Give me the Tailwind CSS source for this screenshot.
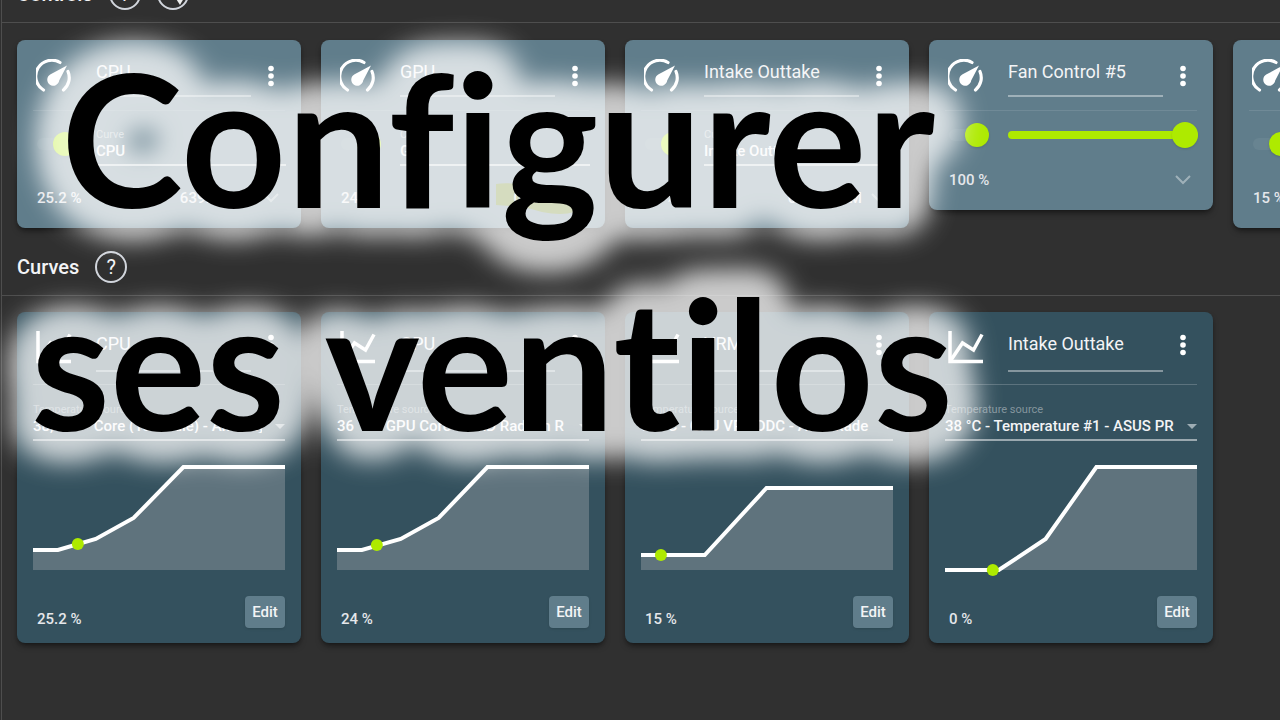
<!DOCTYPE html>
<html lang="fr">
<head>
    <meta charset="UTF-8">
    <meta name="viewport" content="width=device-width, initial-scale=1.0">
    <title>Configurer ses ventilos</title>
    <script src="https://cdn.jsdelivr.net/npm/@tailwindcss/browser@4"></script>
</head>
<body class="bg-[#303030] text-white font-[Roboto,sans-serif] h-screen overflow-hidden relative">
    <main class="ml-px min-h-screen flow-root overflow-hidden border-l border-white/15">
        <section class="-mt-[34px]">
            <header class="h-[57px] pl-[15px] flex items-center gap-4 border-b border-white/15">
                <h2 class="text-xl font-medium text-gray-100">Controls</h2>
                <button aria-label="Help" class="size-8 rounded-full border-2 border-gray-300 text-xl text-gray-100 flex items-center justify-center">?</button>
                <button aria-label="Status" class="size-8 rounded-full border-2 border-gray-300 flex items-center justify-center">
                    <svg class="size-7" viewBox="0 0 28 28" fill="#eee"><path d="M14 14L25 18L21 25Z"/></svg>
                </button>
            </header>
            <div id="controls" class="pt-[17px] pb-[11px] pl-[15px] flex items-start gap-5"></div>
        </section>
        <section>
            <header class="h-[57px] pl-[15px] flex items-center gap-4 border-b border-white/15">
                <h2 class="text-xl font-medium text-gray-100">Curves</h2>
                <button aria-label="Help" class="size-8 rounded-full border-2 border-gray-300 text-xl text-gray-100 flex items-center justify-center">?</button>
            </header>
            <div id="curves" class="pt-4 pl-[15px] flex items-start gap-5"></div>
        </section>
    </main>

    <!-- title over the dashboard, with a soft white halo -->
    <svg class="absolute size-0" aria-hidden="true">
        <filter id="halo" x="-10%" y="-20%" width="120%" height="140%" color-interpolation-filters="sRGB">
            <feGaussianBlur in="SourceAlpha" stdDeviation="18"/>
            <feComponentTransfer>
                <feFuncR type="linear" slope="0" intercept="1"/>
                <feFuncG type="linear" slope="0" intercept="1"/>
                <feFuncB type="linear" slope="0" intercept="1"/>
                <feFuncA type="linear" slope="18"/>
            </feComponentTransfer>
            <feGaussianBlur stdDeviation="11"/>
            <feComponentTransfer result="glow">
                <feFuncA type="linear" slope="0.75"/>
            </feComponentTransfer>
            <feMerge>
                <feMergeNode in="glow"/>
                <feMergeNode in="SourceGraphic"/>
            </feMerge>
        </filter>
    </svg>
    <h1 class="absolute top-6 left-0 w-[996px] text-center leading-[225px] font-bold text-black font-[Lato,sans-serif] [font-variant-ligatures:none] [filter:url(#halo)] pointer-events-none">
        <span class="block text-[184px] leading-[225px]">Configurer</span>
        <span class="block text-[180px] leading-[225px] pr-3">ses ventilos</span>
    </h1>

    <script>
        const controls = [
            { name: 'CPU', curve: 'CPU', value: '25.2 %', rpm: '639.2 RPM' },
            { name: 'GPU', curve: 'GPU', value: '24 %', rpm: '0 RPM', marked: true },
            { name: 'Intake Outtake', curve: 'Intake Outtake', value: '15 %', rpm: '638.5 RPM' },
            { name: 'Fan Control #5', value: '100 %' },
            { name: 'VRM', curve: 'VRM', value: '15 %', rpm: '0 RPM' },
        ];

        const curves = [
            { name: 'CPU', source: '38,3 °C - Core (Tctl/Tdie) - AMD Ryzen', value: '25.2 %', line: '0,86 25,86 63,75 101,54 151,3 253,3', dot: [45, 80] },
            { name: 'GPU', source: '36 °C - GPU Core - AMD Radeon R', value: '24 %', line: '0,86 25,86 64,75 102,54 151,3 253,3', dot: [40, 81] },
            { name: 'VRM', source: '34 °C - GPU VR VDDC - AMD Rade', value: '15 %', line: '0,91 64,91 126,24 253,24', dot: [20, 91] },
            { name: 'Intake Outtake', source: '38 °C - Temperature #1 - ASUS PRIME', value: '0 %', line: '0,106 54,106 101,75 152,3 253,3', dot: [48, 106] },
        ];

        const dots = `<svg class="w-2 h-6" viewBox="0 0 8 24" fill="#fff"><circle cx="4" cy="4.500" r="2.800"/><circle cx="4" cy="12" r="2.800"/><circle cx="4" cy="19.500" r="2.800"/></svg>`;

        const gauge = `
            <svg class="size-9 mt-1 shrink-0" viewBox="0 0 36 36" fill="none" stroke="#fff" stroke-width="3.200">
                <path d="M7.500 31A16 16 0 0 1 24 3.500M32 12.500A16 16 0 0 1 27.500 31" stroke-linecap="round"/>
                <path d="M31 6.500L23.200 21.500A6 6 0 1 1 14.200 15.500Z" fill="#fff" stroke="none"/>
            </svg>`;

        const graph = `
            <svg class="size-9 mt-[3px] shrink-0" viewBox="0 0 36 36" fill="none" stroke="#fff">
                <path d="M2 1V31.500H35" stroke-width="3.500"/>
                <path d="M3 30L14.500 13L25.500 20L34 4.500" stroke-width="3.500"/>
            </svg>`;

        document.getElementById('controls').innerHTML = controls.map((c, i) => `
            <article class="w-[284px] shrink-0 rounded-lg bg-[#607d8b] shadow-md shadow-black/40 overflow-hidden">
                <div class="h-[70px] pt-[15px] pl-[19px] flex items-start">
                    ${gauge}
                    <input aria-label="Control name" value="${c.name}" class="ml-6 w-[155px] h-[42px] pb-2 border-b-2 border-white/40 text-lg text-gray-100 outline-none">
                    <button aria-label="Menu" class="ml-2 w-6 h-[42px] flex items-center justify-center">${dots}</button>
                </div>
                <hr class="mx-4 border-white/10">
                <div class="${c.curve ? 'h-[66px]' : 'h-12'} pl-5 flex items-center">
                    <input type="checkbox" checked aria-label="Enable ${c.name}" class="appearance-none relative w-10 h-6 mr-[19px] shrink-0 before:absolute before:left-0 before:top-[6px] before:w-8 before:h-3 before:rounded-full before:bg-white/5 after:absolute after:right-0 after:top-0 after:size-6 after:rounded-full after:bg-[#aeea00] after:shadow">
                    ${c.curve ? `
                    <div class="w-[190px] pt-[6px] flex flex-col">
                        <label for="curve-${i}" class="text-[11px] leading-[14px] text-white/50">Curve</label>
                        <select id="curve-${i}" class="appearance-none h-6 pb-[6px] border-b-2 border-white/60 text-[15px] leading-[18px] font-medium text-gray-100"><option>${c.curve}</option></select>
                    </div>` : `
                    <input type="range" value="100" aria-label="Fan speed" class="appearance-none w-[190px] h-2 rounded-full bg-[#aeea00] [&::-webkit-slider-thumb]:appearance-none [&::-webkit-slider-thumb]:size-[26px] [&::-webkit-slider-thumb]:rounded-full [&::-webkit-slider-thumb]:bg-[#aeea00] [&::-webkit-slider-thumb]:shadow">`}
                </div>
                <div class="h-[42px] mb-[9px] pl-5 pr-[22px] flex items-center text-[15px] font-medium text-gray-200 relative">
                    ${c.marked ? `<svg class="absolute right-[27px] top-1 w-[84px] h-9" viewBox="0 0 84 36" fill="#5a7400"><path d="M2 3Q20 0 40 8L70 16Q86 24 80 31Q68 35 48 31L30 26L2 24Z"/></svg>` : ''}
                    <span>${c.value}</span>
                    <span class="ml-auto mr-[9px] relative">${c.rpm || ''}</span>
                    <button aria-label="Expand"><svg class="w-4 h-3" viewBox="0 0 16 12" fill="none" stroke="#fff" stroke-opacity="0.400" stroke-width="2"><path d="M1 2L8 9L15 2"/></svg></button>
                </div>
            </article>`).join('');

        document.getElementById('curves').innerHTML = curves.map((c, i) => `
            <article class="w-[284px] shrink-0 rounded-lg bg-[#34515e] shadow-md shadow-black/40 px-4 pb-[15px]">
                <div class="h-[72px] pt-[15px] pl-[3px] flex items-start">
                    ${graph}
                    <input aria-label="Curve name" value="${c.name}" class="ml-6 w-[155px] h-[45px] pb-[11px] border-b-2 border-white/40 text-lg text-gray-100 outline-none">
                    <button aria-label="Menu" class="ml-2 w-6 h-[36px] shrink-0 flex items-center justify-center">${dots}</button>
                </div>
                <hr class="border-white/20">
                <div class="mt-[18px] flex flex-col relative">
                    <label for="source-${i}" class="text-[11px] leading-[14px] text-white/40">Temperature source</label>
                    <select id="source-${i}" class="appearance-none w-full h-6 pr-[23px] pb-[6px] border-b-2 border-white/50 text-[15px] leading-[18px] font-medium text-gray-100 whitespace-nowrap overflow-hidden"><option>${c.source}</option></select>
                    <svg class="absolute right-0 bottom-3 w-[10px] h-[5px]" viewBox="0 0 10 5" fill="#9eadb4"><path d="M0 0H10L5 5Z"/></svg>
                </div>
                <svg class="mt-[23px] w-full h-[110px] overflow-visible" viewBox="0 0 253 110" preserveAspectRatio="none">
                    <polygon points="0,106 ${c.line} 253,106" fill="#5f737d"/>
                    <polyline points="${c.line}" fill="none" stroke="#fff" stroke-width="4"/>
                    <circle cx="${c.dot[0]}" cy="${c.dot[1]}" r="6" fill="#aeea00"/>
                </svg>
                <div class="mt-[22px] pl-1 flex items-end justify-between font-medium text-[15px]">
                    <span class="leading-[18px] text-gray-200">${c.value}</span>
                    <button class="w-10 h-8 rounded-sm bg-[#607d8b] text-gray-100 shadow">Edit</button>
                </div>
            </article>`).join('');
    </script>
</body>
</html>
